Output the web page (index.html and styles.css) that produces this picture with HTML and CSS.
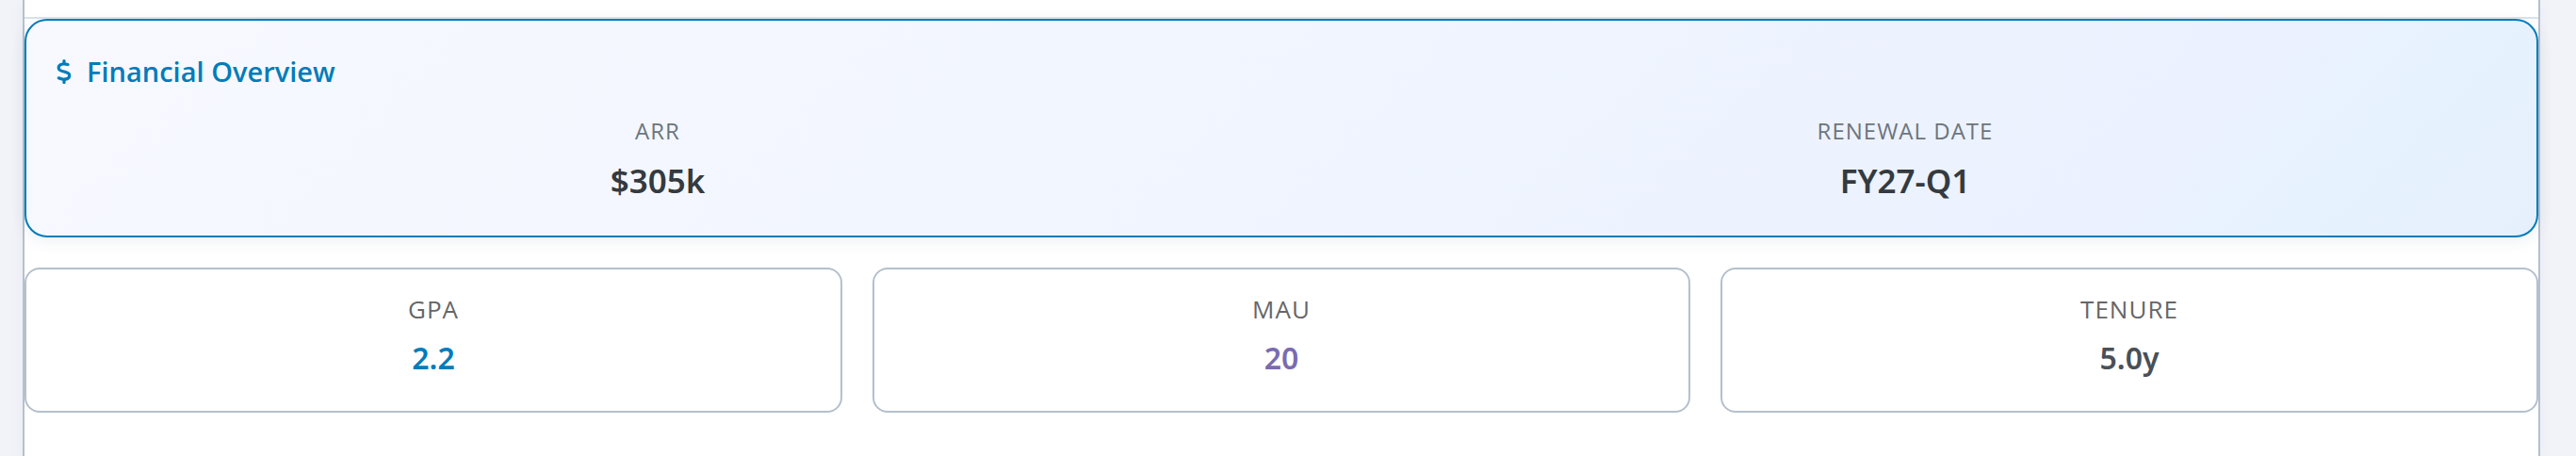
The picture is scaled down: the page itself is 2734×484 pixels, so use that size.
FILE: index.html
```html
<!DOCTYPE html>
<html lang="en">
<head>
<meta charset="utf-8">
<title>Account overview</title>
<link rel="stylesheet" href="styles.css">
</head>
<body>
<main class="panel">
  <section class="finance">
    <h2 class="finance-title">
      <svg class="icon" viewBox="14 0 292 512" aria-hidden="true">
        <path d="M160 0c17.700 0 32 14.300 32 32V67.700c1.600 .2 3.100 .4 4.700 .7c.4 .1 .7 .1 1.100 .2l48 8.800c17.400 3.200 28.900 19.900 25.700 37.200s-19.900 28.900-37.200 25.700l-47.500-8.700c-31.300-4.600-58.900-1.500-78.300 6.200s-27.200 18.300-29 28.100c-2 10.700-.5 16.700 1.200 20.400c1.800 3.900 5.500 8.300 12.800 13.200c16.300 10.700 41.300 17.700 73.700 26.300l2.900 .8c28.600 7.600 63.600 16.800 89.600 33.800c14.200 9.300 27.600 21.900 35.900 39.500c8.500 17.900 10.300 37.900 6.400 59.200c-6.900 38-33.100 63.400-65.600 76.700c-13.700 5.600-28.600 9.200-44.400 11V480c0 17.700-14.300 32-32 32s-32-14.300-32-32V445.100c-.4-.1-.9-.1-1.300-.2l-.2 0 0 0c-24.400-3.800-64.500-14.300-91.500-26.300c-16.100-7.200-23.400-26.100-16.200-42.200s26.100-23.400 42.200-16.200c20.900 9.300 55.300 18.500 75.200 21.600c31.900 4.700 58.200 2 76-5.300c16.900-6.900 24.600-16.900 26.800-28.900c1.900-10.600 .4-16.700-1.300-20.400c-1.900-4-5.600-8.400-13-13.300c-16.400-10.700-41.500-17.700-74-26.300l-2.800-.7 0 0C119.400 279.300 84.400 270 58.400 253c-14.200-9.300-27.500-22-35.800-39.600c-8.400-17.900-10.100-37.900-6.100-59.200C23.700 116 52.300 91.200 84.800 78.300c13.300-5.300 27.900-8.900 43.200-11V32c0-17.700 14.300-32 32-32z"/>
      </svg>
      Financial Overview
    </h2>
    <dl class="finance-grid">
      <div class="metric">
        <dt class="label">ARR</dt>
        <dd class="value">$305k</dd>
      </div>
      <div class="metric">
        <dt class="label">Renewal Date</dt>
        <dd class="value">FY27-Q1</dd>
      </div>
    </dl>
  </section>
  <dl class="stats">
    <div class="stat">
      <dt class="stat-label">GPA</dt>
      <dd class="stat-value blue">2.2</dd>
    </div>
    <div class="stat">
      <dt class="stat-label">MAU</dt>
      <dd class="stat-value purple">20</dd>
    </div>
    <div class="stat">
      <dt class="stat-label">Tenure</dt>
      <dd class="stat-value slate">5.0y</dd>
    </div>
  </dl>
</main>
</body>
</html>
```
FILE: styles.css
```css
* {
  box-sizing: border-box;
}

body {
  margin: 0;
  min-height: 100vh;
  display: flex;
  padding: 0 38px 0 24px;
  background: #f2f3f9;
  font-family: "Open Sans", "Noto Sans", sans-serif;
}

.panel {
  flex: 1;
  padding-top: 18px;
  background: #fff;
  border: solid #b4c0cc;
  border-width: 0 2px;
  box-shadow: 0 4px 16px rgba(0, 40, 80, 0.04);
}

.finance {
  position: relative;
  margin-top: 2px;
  padding: 32px;
  border: 2px solid #007cba;
  border-radius: 24px;
  background: linear-gradient(135deg, #f8f9ff 0%, #f0f5ff 50%, #ebf1fe 84%, #e7f2ff 90%, #e6f0fd 100%);
  box-shadow: 0 4px 16px rgba(0, 60, 90, 0.08);
}

.panel::before {
  content: "";
  display: block;
  height: 2px;
  margin-bottom: -2px;
  background: #dae4ec;
}

.finance-title {
  display: flex;
  align-items: center;
  gap: 16px;
  margin: 0 0 24px;
  font-size: 29px;
  line-height: 44px;
  font-weight: 600;
  color: #007cba;
}

.icon {
  width: 16px;
  height: 26px;
  fill: currentColor;
}

.finance-grid {
  display: grid;
  grid-template-columns: 1fr 1fr;
  gap: 48px;
  margin: 0;
}

.metric,
.stat {
  text-align: center;
}

.label,
.stat-label {
  letter-spacing: 1px;
  text-transform: uppercase;
}

.label {
  margin-bottom: 10px;
  font-size: 24px;
  line-height: 34px;
  color: #6c757d;
}

.value,
.stat-value {
  margin: 0;
  font-family: "Noto Sans", "Open Sans", sans-serif;
  font-weight: 600;
}

.value {
  font-size: 35px;
  line-height: 52px;
  color: #343a40;
}

.stats {
  display: grid;
  grid-template-columns: repeat(3, 1fr);
  gap: 32px;
  margin: 32px 0 0;
}

.stat {
  padding: 24px 24px 32px;
  border: 2px solid #b4c0cc;
  border-radius: 16px;
  background: #fff;
}

.stat-label {
  margin-bottom: 10px;
  font-size: 26px;
  line-height: 36px;
  color: #666;
}

.stat-value {
  font-size: 32px;
  line-height: 48px;
}

.blue {
  color: #007cba;
}

.purple {
  color: #7a6bb0;
}

.slate {
  color: #495057;
}
```
